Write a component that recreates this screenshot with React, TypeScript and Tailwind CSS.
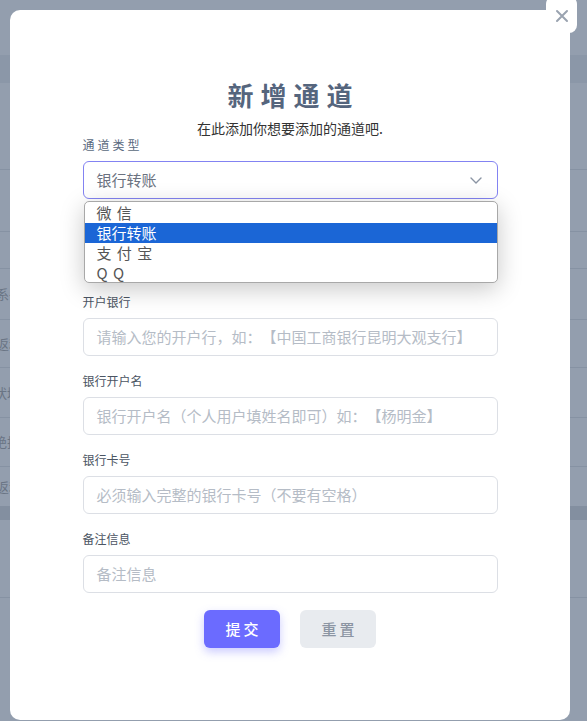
import React from "react";

function Field({ label, placeholder }: { label: string; placeholder: string }) {
  return (
    <div className="flex flex-col">
      <div className="text-[12px] leading-[16px] text-[#4b5563]">{label}</div>
      <div className="mt-2 h-[38px] rounded-[6px] border border-[#dcdfe5] flex items-center pl-[13px] text-[15px] text-[#b5bcc6] whitespace-nowrap">
        {placeholder}
      </div>
    </div>
  );
}

export default function App() {
  const bgRow = "border-b border-[#8692a3] flex items-center text-[13px] text-[#6a7585] whitespace-nowrap";
  return (
    <div className="relative w-[587px] h-[721px] overflow-hidden bg-[#939eae] font-['Noto_Sans_CJK_SC',sans-serif] [text-spacing-trim:space-all]">
      {/* background page (dimmed) */}
      <div className="flex flex-col">
        <div className="h-[55px]" />
        <div className="h-[28px] bg-[#8b97a8]" />
        <div className={`h-[87px] ${bgRow}`} />
        <div className={`h-[62px] ${bgRow}`} />
        <div className={`h-[37px] ${bgRow}`} />
        <div className={`h-[51px] ${bgRow}`}><span className="-ml-[17px]">联系手机</span></div>
        <div className={`h-[48px] ${bgRow}`}><span className="-ml-[4px]">返利</span></div>
        <div className={`h-[50px] ${bgRow}`}><span className="-ml-[6px]">状域</span></div>
        <div className={`h-[49px] ${bgRow}`}><span className="-ml-[6px]">绝技</span></div>
        <div className="h-[39px] flex items-center text-[13px] text-[#6a7585] whitespace-nowrap"><span className="-ml-[4px]">返利</span></div>
        <div className="h-[14px] bg-[#838fa0]" />
        <div className={`h-[78px] ${bgRow}`} />
      </div>

      {/* modal */}
      <div className="absolute left-[10px] top-[10px] w-[560px] h-[710px] bg-white rounded-[10px] flex flex-col items-center pt-[68px]">
        <div className="text-[26px] leading-[34px] font-bold text-[#55657d] tracking-[7px] pl-[7px]">新增通道</div>
        <div className="mt-[7px] text-[14px] leading-[18px] text-[#333333]">在此添加你想要添加的通道吧.</div>

        <div className="w-[415px] flex flex-col gap-[17px]">
          <div className="flex flex-col">
            <div className="text-[12px] leading-[16px] text-[#5a6a80] tracking-[3px]">通道类型</div>
            <div className="relative mt-2">
              <div className="h-[38px] rounded-[6px] border border-[#8383f2] flex items-center justify-between pl-[13px] pr-[14px] text-[15px] text-[#6b7280]">
                <span>银行转账</span>
                <svg width="14" height="14" viewBox="0 0 14 14" fill="none">
                  <polyline points="2,5 7,10 12,5" stroke="#8a94a3" strokeWidth="1.4" strokeLinecap="round" strokeLinejoin="round" />
                </svg>
              </div>
              <div className="absolute z-10 left-[1px] top-[40px] w-[414px] h-[82px] rounded-[5px] border border-[#a8a8a8] bg-white shadow-[0_6px_24px_rgba(0,0,0,0.22)] flex flex-col py-px text-[15px] text-[#555555] overflow-hidden [word-spacing:2px]">
                <div className="h-[20px] leading-[20px] pl-[12px] whitespace-pre">微 信</div>
                <div className="h-[20px] leading-[20px] pl-[12px] bg-[#1b66d6] text-white">银行转账</div>
                <div className="h-[20px] leading-[20px] pl-[12px] whitespace-pre">支 付 宝</div>
                <div className="h-[20px] leading-[20px] pl-[12px] whitespace-pre">Q Q</div>
              </div>
            </div>
          </div>

          <div className="h-[61px]" />

          <Field label="开户银行" placeholder="请输入您的开户行，如：【中国工商银行昆明大观支行】" />
          <Field label="银行开户名" placeholder="银行开户名（个人用户填姓名即可）如：【杨明金】" />
          <Field label="银行卡号" placeholder="必须输入完整的银行卡号（不要有空格）" />
          <Field label="备注信息" placeholder="备注信息" />

          <div className="flex justify-center gap-[20px]">
            <button className="w-[76px] h-[38px] rounded-[6px] bg-[#6b6bff] text-white text-[15px] font-medium tracking-[3px] pl-[3px] shadow-[0_4px_10px_rgba(107,107,255,0.35)]">
              提交
            </button>
            <button className="w-[76px] h-[38px] rounded-[6px] bg-[#e8ebef] text-[#8c95a3] text-[15px] font-medium tracking-[3px] pl-[3px]">
              重置
            </button>
          </div>
        </div>
      </div>

      {/* close button */}
      <button className="absolute left-[546px] top-[-4px] w-[31px] h-[37px] rounded-[8px] bg-white flex items-center justify-center pt-[2px]">
        <svg width="14" height="14" viewBox="0 0 14 14" fill="none">
          <path d="M2 2 L12 12 M12 2 L2 12" stroke="#9aa3b0" strokeWidth="2" strokeLinecap="round" />
        </svg>
      </button>
    </div>
  );
}
